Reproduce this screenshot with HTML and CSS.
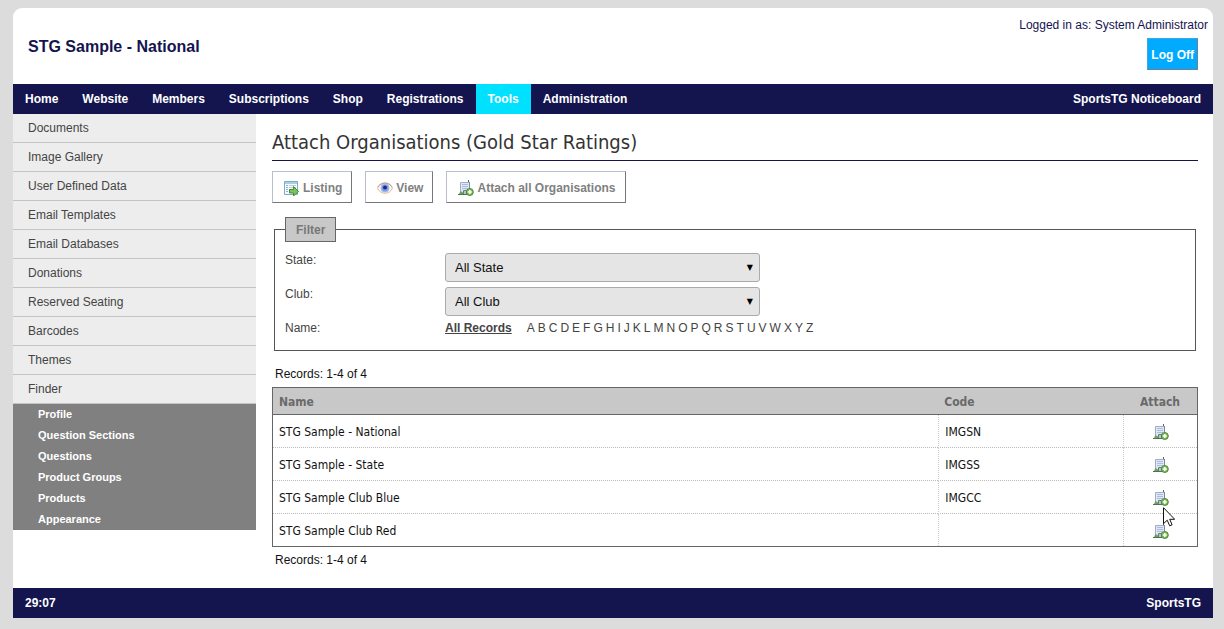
FILE: index.html
```html
<!DOCTYPE html>
<html lang="en">
<head>
<meta charset="utf-8">
<title>Attach Organisations</title>
<link rel="stylesheet" href="styles.css">
</head>
<body>
<svg class="defs" aria-hidden="true">
  <symbol id="org-add" viewBox="0 0 16 16">
    <path d="M10.500 0v3" stroke="#59636e" fill="none"/>
    <path d="M2.500 2.500h9v11h-9z" fill="#dfe8f8" stroke="#a3abbe"/>
    <path d="M11.500 2v8" stroke="#7d8995" fill="none"/>
    <path d="M4 4.500h6M4 6.500h6M4 8.500h6" stroke="#a9bce0" fill="none"/>
    <path d="M0.500 15l2-4 2.500 1.500V15z" fill="#6fa060"/>
    <path d="M0 14.500h10" stroke="#4b7550" fill="none"/>
    <path d="M5.500 14v-3.500h3V14" fill="#b9c5c4" stroke="#687f78"/>
    <circle cx="11.800" cy="12" r="3.500" fill="#7fba5e" stroke="#4f8a38"/>
    <path d="M11.800 10v4M9.800 12h4" stroke="#fff" stroke-width="1.500" fill="none"/>
  </symbol>
</svg>
<div class="page">
  <header class="header">
    <div class="org-name">STG Sample - National</div>
    <div class="account">
      <div>Logged in as: System Administrator</div>
      <button class="logoff" type="button">Log Off</button>
    </div>
  </header>
  <nav class="bar">
    <a href="#">Home</a>
    <a href="#">Website</a>
    <a href="#">Members</a>
    <a href="#">Subscriptions</a>
    <a href="#">Shop</a>
    <a href="#">Registrations</a>
    <a href="#" class="active">Tools</a>
    <a href="#">Administration</a>
    <a href="#" class="end">SportsTG Noticeboard</a>
  </nav>
  <div class="body">
    <aside class="sidebar">
      <ul class="menu">
        <li><a href="#">Documents</a></li>
        <li><a href="#">Image Gallery</a></li>
        <li><a href="#">User Defined Data</a></li>
        <li><a href="#">Email Templates</a></li>
        <li><a href="#">Email Databases</a></li>
        <li><a href="#">Donations</a></li>
        <li><a href="#">Reserved Seating</a></li>
        <li><a href="#">Barcodes</a></li>
        <li><a href="#">Themes</a></li>
        <li><a href="#">Finder</a></li>
      </ul>
      <ul class="submenu">
        <li><a href="#">Profile</a></li>
        <li><a href="#">Question Sections</a></li>
        <li><a href="#">Questions</a></li>
        <li><a href="#">Product Groups</a></li>
        <li><a href="#">Products</a></li>
        <li><a href="#">Appearance</a></li>
      </ul>
    </aside>
    <main class="main">
      <h1 class="title">Attach Organisations (Gold Star Ratings)</h1>
      <div class="toolbar">
        <button class="tool" type="button">
          <svg class="icon" viewBox="0 0 16 16" aria-hidden="true">
            <path d="M0.500 1.500h13v13H0.500z" fill="#f4faff" stroke="#7fa8cc"/>
            <path d="M1 2h12v2H1z" fill="#a6d2dc"/>
            <path d="M2 5.500h2M2 7.500h2M2 9.500h2M2 11.500h2" stroke="#8fb3cc" fill="none"/>
            <path d="M5 5.500h7M5 7.500h7M5 9.500h2M5 11.500h1" stroke="#bccbd6" fill="none"/>
            <path d="M5.500 9.500h4V6.500l5 5-5 4.500v-3h-4z" fill="#7cc455" stroke="#4a8a3d"/>
          </svg>
          Listing
        </button>
        <button class="tool" type="button">
          <svg class="icon" viewBox="0 0 16 16" aria-hidden="true">
            <path d="M0.500 8C3 1 13 1 15.500 8 13 15 3 15 0.500 8z" fill="#f8f6f4" stroke="#e0b98f"/>
            <path d="M1 7C4 2 12 2 15 7" fill="none" stroke="#b79a90"/>
            <circle cx="8" cy="8" r="4" fill="#7f9fe8" stroke="#a6b9ec"/>
            <circle cx="8" cy="7.500" r="2" fill="#1c2b8c"/>
          </svg>
          View
        </button>
        <button class="tool" type="button">
          <svg class="icon" aria-hidden="true"><use href="#org-add"/></svg>
          Attach all Organisations
        </button>
      </div>
      <fieldset class="filter">
        <legend>Filter</legend>
        <div class="field">
          <label for="state">State:</label>
          <div class="select"><select id="state"><option>All State</option></select></div>
        </div>
        <div class="field">
          <label for="club">Club:</label>
          <div class="select"><select id="club"><option>All Club</option></select></div>
        </div>
        <div class="field">
          <span>Name:</span>
          <div class="letters">
            <a href="#" class="all">All Records</a>
            <a href="#">A</a> <a href="#">B</a> <a href="#">C</a> <a href="#">D</a> <a href="#">E</a> <a href="#">F</a> <a href="#">G</a> <a href="#">H</a> <a href="#">I</a> <a href="#">J</a> <a href="#">K</a> <a href="#">L</a> <a href="#">M</a> <a href="#">N</a> <a href="#">O</a> <a href="#">P</a> <a href="#">Q</a> <a href="#">R</a> <a href="#">S</a> <a href="#">T</a> <a href="#">U</a> <a href="#">V</a> <a href="#">W</a> <a href="#">X</a> <a href="#">Y</a> <a href="#">Z</a>
          </div>
        </div>
      </fieldset>
      <p class="records">Records: 1-4 of 4</p>
      <table class="grid">
        <thead>
          <tr><th class="name">Name</th><th class="code">Code</th><th class="attach">Attach</th></tr>
        </thead>
        <tbody>
          <tr><td>STG Sample - National</td><td>IMGSN</td><td><button class="add" type="button" aria-label="Attach"><svg class="icon"><use href="#org-add"/></svg></button></td></tr>
          <tr><td>STG Sample - State</td><td>IMGSS</td><td><button class="add" type="button" aria-label="Attach"><svg class="icon"><use href="#org-add"/></svg></button></td></tr>
          <tr><td>STG Sample Club Blue</td><td>IMGCC</td><td><button class="add" type="button" aria-label="Attach"><svg class="icon"><use href="#org-add"/></svg><svg class="pointer" viewBox="0 0 12 20" aria-hidden="true"><path d="M0.500 0.700v16l3.700-3.500 2.500 5.600 2.400-1-2.400-5.500h5z" fill="#fff" stroke="#111"/></svg></button></td></tr>
          <tr><td>STG Sample Club Red</td><td></td><td><button class="add" type="button" aria-label="Attach"><svg class="icon"><use href="#org-add"/></svg></button></td></tr>
        </tbody>
      </table>
      <p class="records">Records: 1-4 of 4</p>
    </main>
  </div>
  <footer class="bar">
    <span>29:07</span>
    <a href="#" class="end">SportsTG</a>
  </footer>
</div>
</body>
</html>
```

FILE: styles.css
```css
* {
  box-sizing: border-box;
}

body {
  margin: 0;
  padding: 8px 11px 11px 13px;
  background: #dcdcdc;
  color: #111;
  font: 12px/14px "Liberation Sans", Arial, sans-serif;
}

a {
  color: inherit;
  text-decoration: none;
}

ul {
  margin: 0;
  padding: 0;
  list-style: none;
}

button {
  font: inherit;
  cursor: pointer;
}

.defs {
  display: none;
}

.page {
  overflow: hidden;
  background: #fff;
  border-radius: 9px 9px 0 0;
}

.header {
  display: flex;
  justify-content: space-between;
  min-height: 76px;
  padding: 10px 5px 14px 15px;
  color: #14144f;
}

.org-name {
  padding-top: 19px;
  font-size: 16px;
  font-weight: bold;
  line-height: 20px;
}

.account {
  display: flex;
  flex-direction: column;
  align-items: flex-end;
  gap: 6px;
}

.logoff {
  height: 32px;
  margin-right: 10px;
  padding: 2px 3px 0;
  border: 1px solid;
  border-color: #3aa9e8 #708090 #708090 #3aa9e8;
  background: #00aaff;
  color: #fff;
  font-weight: bold;
}

.bar {
  display: flex;
  background: #14144f;
  color: #fff;
  font-weight: bold;
  line-height: 30px;
}

.bar > * {
  padding: 0 12px;
}

.bar .active {
  background: #00e1ff;
}

.bar .end {
  margin-left: auto;
}

.body {
  display: flex;
  align-items: flex-start;
}

.sidebar {
  flex: 0 0 244px;
  padding-right: 1px;
}

.menu {
  color: #444;
}

.menu a {
  display: block;
  padding: 0 15px;
  border-bottom: 1px solid #c4c4c4;
  background: #ededed;
  line-height: 28px;
}

.submenu {
  background: #808080;
  color: #fff;
  font-size: 11px;
  font-weight: bold;
  line-height: 21px;
}

.submenu a {
  display: block;
  padding-left: 25px;
}

.main {
  flex: 1;
  padding: 14px 15px 15px;
}

.title {
  margin: 0 0 10px;
  padding-bottom: 4px;
  border-bottom: 1px solid #14144f;
  color: #333;
  font: 20px/28px "DejaVu Sans Condensed", Tahoma, sans-serif;
}

.toolbar {
  display: flex;
  gap: 13px;
  margin-bottom: 14px;
}

.tool {
  display: flex;
  align-items: center;
  gap: 3px;
  height: 32px;
  padding: 1px 9px 0 11px;
  border: 1px solid;
  border-color: #b9bfd0 #777 #777 #b9bfd0;
  background: #fff;
  color: #808080;
  font-weight: bold;
}

.icon {
  display: block;
  width: 16px;
  height: 16px;
}

.filter {
  margin: 0 2px 16px;
  padding: 11px 10px 15px;
  border: 1px solid #555;
  color: #444;
}

.filter legend {
  padding: 5px 10px 4px;
  border: 1px solid #666;
  background: #c8c8c8;
  color: #777;
  font-weight: bold;
}

.field {
  display: grid;
  grid-template-columns: 160px 1fr;
}

.select {
  position: relative;
  width: 315px;
  margin-bottom: 5px;
}

.select::after {
  content: "▼";
  position: absolute;
  top: 8px;
  right: 7px;
  color: #000;
  font: 8px/14px "DejaVu Sans", sans-serif;
  pointer-events: none;
}

.select select {
  display: block;
  width: 100%;
  height: 29px;
  padding: 0 20px 0 9px;
  appearance: none;
  border: 1px solid #aaa;
  border-radius: 3px;
  background: #e5e5e5;
  color: #111;
  font: 13px "Liberation Sans", Arial, sans-serif;
}

.letters {
  display: flex;
  flex-wrap: wrap;
  gap: 3px;
}

.letters .all {
  margin-right: 12px;
  font-weight: bold;
  text-decoration: underline;
}

.records {
  margin: 0 3px 6px;
}

.grid {
  width: 100%;
  margin-bottom: 6px;
  border: 1px solid #666;
  border-spacing: 0;
  font: 12px/14px "DejaVu Sans Condensed", Tahoma, sans-serif;
}

.grid th {
  height: 27px;
  padding: 2px 6px 0;
  border-bottom: 1px solid #666;
  background: #c8c8c8;
  color: #6a6a6a;
  text-align: left;
}

.grid td {
  height: 33px;
  padding: 2px 6px 0;
  border-bottom: 1px dotted #bbb;
}

.grid tr:last-child td {
  height: 32px;
  border-bottom: 0;
}

.grid td + td {
  border-left: 1px dotted #ccc;
}

.grid .name {
  width: 72%;
}

.grid .code {
  width: 20%;
}

.grid .attach {
  width: 8%;
  text-align: center;
}

.add {
  position: relative;
  display: block;
  margin: 0 auto;
  padding: 0;
  border: 0;
  background: none;
}

.pointer {
  position: absolute;
  z-index: 1;
  top: 17px;
  left: 10px;
  width: 12px;
  height: 20px;
}
```
